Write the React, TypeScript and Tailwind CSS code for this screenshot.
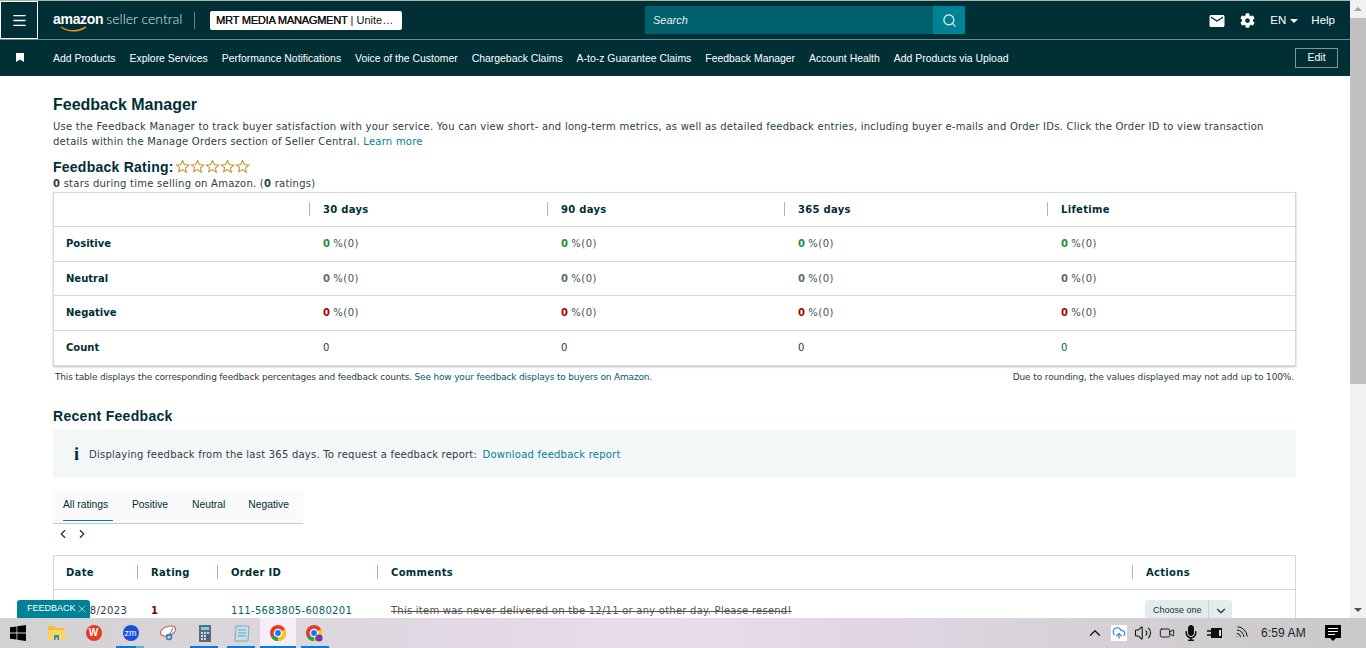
import React from "react";
import { ChevronLeft, ChevronRight, ChevronDown, ChevronUp, Menu, Search, Volume2, Wifi, X, CloudUpload, Video } from "lucide-react";
import { MdEmail } from "react-icons/md";
import { FaCog, FaMicrophone } from "react-icons/fa";

const navItems = ["Add Products","Explore Services","Performance Notifications","Voice of the Customer","Chargeback Claims","A-to-z Guarantee Claims","Feedback Manager","Account Health","Add Products via Upload"];

function Star() {
  return (
    <svg width="15" height="15" viewBox="0 0 24 24" fill="none" stroke="#c98f2c" strokeWidth="1.7">
      <path d="M12 2.5l2.9 6.4 7 .8-5.2 4.7 1.4 6.9L12 17l-6.1 3.3 1.4-6.9L2.1 9.7l7-.8z" />
    </svg>
  );
}

function Row({ label, color, count }: { label: string; color: string; count?: boolean }) {
  return (
    <div className="grid grid-cols-[256px_238px_237px_263px_1fr] items-center h-[34.6px] pt-[1px] border-t border-[#d5d9d9]">
      <div className="pl-3 font-bold text-[#002f36]">{label}</div>
      {[0,1,2,3].map((i) => (
        <div key={i} className="pl-[13px] text-[#3f5357]">
          {count ? (
            <span className={i === 3 ? "text-[#00606b]" : "text-[#2b3a3d]"}>0</span>
          ) : (
            <><span className={`font-bold ${color}`}>0</span> <span className="tracking-[0.55px]">%(0)</span></>
          )}
        </div>
      ))}
    </div>
  );
}

function HeadCell({ children }: { children?: React.ReactNode }) {
  return (
    <div className="relative pl-[13px] font-bold text-[#002f36] tracking-[0.3px] flex items-center h-full">
      <span className="absolute left-[-1px] top-[9px] h-[14px] w-px bg-[#aab7b8]" />
      {children}
    </div>
  );
}

function ChromeIcon({ size, badge }: { size: number; badge?: boolean }) {
  return (
    <svg width={size} height={size} viewBox={badge ? "0 0 17 17" : "0 0 16 16"}>
      <circle cx="8" cy="8" r="8" fill="#e33b2e" />
      <path d="M8 8L1 12a8 8 0 0 0 7 4z" fill="#2ba24c" />
      <path d="M8 8l7-4a8 8 0 0 1-7 12z" fill="#f8c51c" />
      <circle cx="8" cy="8" r="3.6" fill="#1a73e8" stroke="#fff" strokeWidth="1.4" />
      {badge && <circle cx="13" cy="13" r="3.6" fill="#7b2fa8" />}
    </svg>
  );
}

function Taskbar() {
  return (
    <div className="relative h-[30px] shrink-0 flex items-center bg-gradient-to-r from-[#d2d2d2] via-[#e9dcec] to-[#c9c9c9] text-black font-['Liberation_Sans',sans-serif]">
      <div className="w-[38px] pr-[2px] flex justify-center">
        <svg width="16" height="16" viewBox="0 0 16 16" fill="#000"><path d="M0 2.3l6.5-.9v6.2H0zM7.3 1.3L16 0v7.6H7.3zM0 8.4h6.5v6.2L0 13.7zM7.3 8.4H16V16l-8.7-1.3z"/></svg>
      </div>
      <div className="flex items-center">
        <div className="w-[37px] h-[30px] flex items-center justify-center">
          <svg width="17" height="16" viewBox="0 0 17 16"><path d="M0 1h6l2 2h8v3H0z" fill="#f6b93b"/><path d="M0 5h17v10H0z" fill="#fcd462"/><path d="M6 10h5v5H9.5v-2.5h-2V15H6z" fill="#1e88d9"/></svg>
        </div>
        <div className="w-[37px] h-[30px] flex items-center justify-center">
          <div className="w-[16px] h-[16px] rounded-full bg-[#e8391f] flex items-center justify-center text-white font-bold text-[10px] leading-none">W</div>
        </div>
        <div className="relative w-[37px] h-[30px] flex items-center justify-center">
          <div className="w-[16px] h-[16px] rounded-full bg-[#1a4fd8] flex items-center justify-center text-white text-[9px] leading-none">zm</div>
          <span className="absolute bottom-0 left-[4px] w-[20px] h-[2px] bg-[#0f78d4]" />
          <span className="absolute bottom-0 left-[24px] w-[8px] h-[2px] bg-[#6aa9e0]" />
        </div>
        <div className="w-[37px] h-[30px] flex items-center justify-center">
          <svg width="18" height="17" viewBox="0 0 18 17" fill="none"><ellipse cx="9" cy="6" rx="8" ry="4.5" transform="rotate(-20 9 6)" fill="#fff" stroke="#d9534f"/><circle cx="10" cy="12" r="2.5" stroke="#2a7cc7" strokeWidth="1.4"/><path d="M11 9l3-6" stroke="#2a7cc7"/></svg>
        </div>
        <div className="relative w-[37px] h-[30px] flex items-center justify-center">
          <svg width="12" height="17" viewBox="0 0 12 17"><rect width="12" height="17" fill="#5d6b78"/><rect x="2" y="2" width="8" height="3" fill="#6ed0f5"/><path d="M2 7h2v2H2zM5 7h2v2H5zM8 7h2v2H8zM2 10h2v2H2zM5 10h2v2H5zM2 13h2v2H2zM5 13h2v2H5z" fill="#cfd8dc"/><rect x="8" y="10" width="2" height="5" fill="#1f5fa8"/></svg>
          <span className="absolute bottom-0 left-[4px] w-[28px] h-[2px] bg-[#0f78d4]" />
        </div>
        <div className="relative w-[37px] h-[30px] flex items-center justify-center">
          <svg width="16" height="17" viewBox="0 0 16 17"><path d="M2 1h13l-1 15H1z" fill="#bfe3ee" stroke="#7a8a8f" strokeWidth=".7"/><path d="M4 5h8M4 8h8M4 11h8" stroke="#6f9fb2"/></svg>
          <span className="absolute bottom-0 left-[4px] w-[28px] h-[2px] bg-[#0f78d4]" />
        </div>
        <div className="relative w-[36px] h-[30px] flex items-center justify-center bg-[#f4eef8]">
          <ChromeIcon size={16} />
          <span className="absolute bottom-0 left-0 w-[36px] h-[2px] bg-[#0f78d4]" />
        </div>
        <div className="relative w-[37px] h-[30px] flex items-center justify-center">
          <ChromeIcon size={17} badge />
          <span className="absolute bottom-0 left-[5px] w-[28px] h-[2px] bg-[#0f78d4]" />
        </div>
      </div>
      <div className="ml-auto flex items-center h-full text-[#111] pr-[25px]">
        <ChevronUp size={18} strokeWidth={1.6} />
        <div className="ml-[7px] w-[16px] h-[16px] bg-white flex items-center justify-center"><CloudUpload size={14} className="text-[#2f7de1]" /></div>
        <Volume2 size={18} strokeWidth={1.4} className="ml-[7px]" />
        <Video size={16} strokeWidth={1.4} className="ml-[7px]" />
        <FaMicrophone size={16} className="ml-[8px]" />
        <svg width="16" height="12" viewBox="0 0 16 12" className="ml-[8px]"><path d="M4 1h11v10H4z" fill="#111"/><path d="M0 4h4M0 8h4" stroke="#111" strokeWidth="1.5"/><rect x="12" y="3" width="2" height="6" fill="#ddd"/></svg>
        <Wifi size={16} strokeWidth={1.4} className="ml-[10px] rotate-45" />
        <span className="ml-[12px] w-[43px] text-[12px] whitespace-nowrap tracking-[0.1px] text-[#222]">6:59 AM</span>
        <svg width="16" height="17" viewBox="0 0 16 17" className="ml-[21px]"><path d="M0 0h16v13h-5l-3 3-3-3H0z" fill="#000"/><path d="M3 3.5h10M3 6.5h10M3 9.5h7" stroke="#fff" strokeWidth="1.1"/></svg>
      </div>
    </div>
  );
}

export default function App() {
  return (
    <div className="h-[648px] w-[1366px] overflow-hidden flex flex-col relative font-['DejaVu_Sans',Verdana,sans-serif] text-[10px] text-[#2b4045] bg-white">
      <div className="flex flex-1 min-h-0">
        <div className="flex-1 min-w-0 flex flex-col overflow-hidden">
          <div className="h-px bg-[#a9b5a9] shrink-0" />
          <header className="h-[39px] bg-[#002f36] flex items-center border-b border-[#6f8a8c] text-white font-['Liberation_Sans',sans-serif] shrink-0 relative">
            <div className="w-[38px] h-[38px] border border-white flex items-center justify-center"><Menu size={17} strokeWidth={1.8} /></div>
            <div className="ml-[15px] flex items-baseline leading-none relative -mt-[3px]">
              <span className="text-[14px] font-bold tracking-[-0.3px]">amazon</span>
              <span className="ml-[3px] text-[14px] text-[#dfe6e7] font-['Lato',sans-serif] font-light">seller central</span>
              <svg width="28" height="7" viewBox="0 0 28 7" className="absolute left-[7px] top-[14px]"><path d="M1 1c7 5 17 5 25 0" fill="none" stroke="#e88f1f" strokeWidth="1.5"/></svg>
            </div>
            <div className="absolute left-[194px] top-[11px] w-px h-[17px] bg-[#6d8589]" />
            <div className="absolute left-[210px] top-[10px] w-[192px] h-[19px] bg-white rounded-[2px] text-[#0f1111] text-[11px] flex items-center pl-[6px] whitespace-nowrap"><span className="[text-shadow:0.3px_0_0_#111] tracking-[-0.2px]">MRT MEDIA MANAGMENT</span><span>&nbsp;| Unite…</span></div>
            <div className="absolute left-[645px] top-[5px] w-[320px] h-[28px] flex">
              <div className="flex-1 bg-[#00606b] italic text-[11px] flex items-center pl-[8px] text-[#e6eff0]">Search</div>
              <div className="w-[32px] bg-[#008296] flex items-center justify-center"><Search size={15} strokeWidth={1.8} /></div>
            </div>
            <div className="ml-auto flex items-center text-[11.5px] pr-[15px] pt-[1px]">
              <MdEmail size={18} />
              <FaCog size={15} className="ml-[14px]" />
              <span className="ml-[15px]">EN</span>
              <span className="ml-[4px] w-0 h-0 border-x-[4px] border-x-transparent border-t-[4px] border-t-white" />
              <span className="ml-[13px]">Help</span>
            </div>
          </header>
          <nav className="h-[36px] bg-[#002f36] flex items-center text-white text-[10.43px] font-['Liberation_Sans',sans-serif] shrink-0">
            <svg width="8" height="9" viewBox="0 0 8 9" className="ml-[16px] mr-[29px] -mt-[1px]" fill="#fff"><path d="M0 0h8v9L4 6.5 0 9z"/></svg>
            <div className="flex gap-[14px] pt-[1px]">{navItems.map((n) => <span key={n}>{n}</span>)}</div>
            <div className="ml-auto mr-[12px] w-[43px] h-[20px] border border-[#7f9598] text-[10.5px] flex items-center justify-center">Edit</div>
          </nav>
          <main className="flex-1 min-h-0 overflow-hidden pl-[53px] pr-[54px]">
            <h1 className="mt-[20px] font-['Liberation_Sans',sans-serif] font-bold text-[16px] leading-[18px] text-[#002f36]">Feedback Manager</h1>
            <p className="mt-[6px] leading-[14.5px] tracking-[0.245px]">Use the Feedback Manager to track buyer satisfaction with your service. You can view short- and long-term metrics, as well as detailed feedback entries, including buyer e-mails and Order IDs. Click the Order ID to view transaction details within the Manage Orders section of Seller Central. <span className="text-[#008296]">Learn more</span></p>
            <div className="mt-[10px] h-[16px] flex items-center">
              <span className="font-['Liberation_Sans',sans-serif] font-bold text-[14px] text-[#002f36] tracking-[0.25px]">Feedback Rating:</span>
              <span className="ml-[1px] flex -mt-[2px]"><Star /><Star /><Star /><Star /><Star /></span>
            </div>
            <div className="mt-[2px] leading-[14px] tracking-[0.25px]"><b>0</b> stars during time selling on Amazon. (<b>0</b> ratings)</div>
            <section className="mt-[1px] h-[174px] border border-[#d5d9d9] shadow-[0_1px_2px_rgba(0,0,0,0.25)] leading-none">
              <div className="grid grid-cols-[256px_238px_237px_263px_1fr] h-[33px]">
                <div />
                <HeadCell>30 days</HeadCell><HeadCell>90 days</HeadCell><HeadCell>365 days</HeadCell><HeadCell>Lifetime</HeadCell>
              </div>
              <Row label="Positive" color="text-[#1e8e3e]" />
              <Row label="Neutral" color="text-[#5a6a6e]" />
              <Row label="Negative" color="text-[#a80000]" />
              <Row label="Count" color="" count />
            </section>
            <div className="mt-[5px] flex justify-between text-[9px] leading-[12px] px-[2px]">
              <span className="tracking-[-0.18px]">This table displays the corresponding feedback percentages and feedback counts. <span className="text-[#00606b]">See how your feedback displays to buyers on Amazon.</span></span>
              <span className="tracking-[-0.13px]">Due to rounding, the values displayed may not add up to 100%.</span>
            </div>
            <h2 className="mt-[25px] font-['Liberation_Sans',sans-serif] font-bold text-[14px] leading-[16px] text-[#002f36] tracking-[0.3px]">Recent Feedback</h2>
            <div className="mt-[6px] h-[48px] bg-[#f4f7f7] flex items-center pl-[21px] tracking-[0.23px]">
              <span className="font-['Liberation_Serif',serif] font-bold text-[18px] text-[#002f36] w-[15px]">i</span>
              <span>Displaying feedback from the last 365 days. To request a feedback report: <span className="text-[#008296] ml-[2px]">Download feedback report</span></span>
            </div>
            <div className="mt-[11px] w-[250px] h-[35px] bg-[#fafafa] border-b border-[#c4c9c9] flex items-center font-['Liberation_Sans',sans-serif] text-[10.3px] text-[#002f36] pl-[10px] pb-[3px]">
              <span className="relative h-full flex items-center w-[50px]">All ratings<span className="absolute left-0 -bottom-[1px] h-[1px] w-[50px] bg-[#008296]" /></span>
              <span className="ml-[19px]">Positive</span>
              <span className="ml-[24px]">Neutral</span>
              <span className="ml-[23px]">Negative</span>
            </div>
            <div className="flex h-[19px] items-center pl-[3px] text-[#16353b] gap-[5px]">
              <ChevronLeft size={14} strokeWidth={2} /><ChevronRight size={14} strokeWidth={2} />
            </div>
            <section className="mt-[12px] border border-[#d5d9d9] border-b-0 leading-none h-[70px]">
              <div className="grid grid-cols-[84px_80px_160px_755px_1fr] h-[33px]">
                <div className="pl-3 font-bold text-[#002f36] flex items-center tracking-[0.3px]">Date</div>
                <HeadCell>Rating</HeadCell><HeadCell>Order ID</HeadCell><HeadCell>Comments</HeadCell><HeadCell>Actions</HeadCell>
              </div>
              <div className="grid grid-cols-[84px_80px_160px_755px_1fr] border-t border-[#d5d9d9] items-center h-[40px] pt-[2px]">
                <div className="pl-3 tracking-[0.35px]">12/18/2023</div>
                <div className="pl-[13px] font-bold text-[#7a0000]">1</div>
                <div className="pl-[13px] text-[#00606b] tracking-[0.3px]">111-5683805-6080201</div>
                <div className="pl-[13px] line-through tracking-[0.24px] text-[#555]">This item was never delivered on tbe 12/11 or any other day. Please resend!</div>
                <div className="pl-[12px]">
                  <div className="w-[87px] h-[22px] rounded-t-[3px] bg-[#e3ecec] flex items-center font-['Liberation_Sans',sans-serif] text-[9px] text-[#16353b]">
                    <span className="w-[63px] pl-[8px]">Choose one</span>
                    <span className="flex-1 h-full border-l border-[#c9d5d5] flex items-center justify-center"><ChevronDown size={14} strokeWidth={2} /></span>
                  </div>
                </div>
              </div>
            </section>
          </main>
        </div>
        <div className="w-[16px] shrink-0 bg-[#f1f1f1] flex flex-col items-center">
          <div className="h-[18px] flex items-center"><span className="w-0 h-0 border-x-[4px] border-x-transparent border-b-[4px] border-b-[#a3a3a3]" /></div>
          <div className="w-[16px] h-[366px] bg-[#c1c1c1]" />
          <div className="mt-auto h-[17px] flex items-center"><span className="w-0 h-0 border-x-[4px] border-x-transparent border-t-[4px] border-t-[#505050]" /></div>
        </div>
      </div>
      <Taskbar />
      <div className="absolute left-[17px] top-[600px] w-[73px] h-[18px] bg-[#008296] rounded-t-[3px] text-white font-['Liberation_Sans',sans-serif] text-[9px] flex items-center pl-[10px] whitespace-nowrap">FEEDBACK<X size={12} strokeWidth={1.2} className="shrink-0" /></div>
    </div>
  );
}
